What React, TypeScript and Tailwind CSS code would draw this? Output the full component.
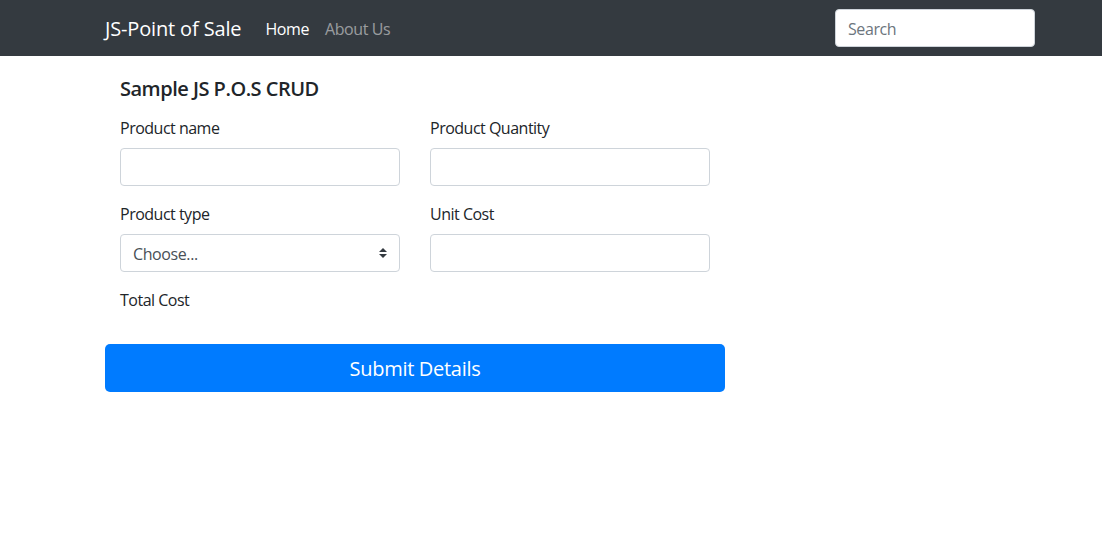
import React from "react";

export default function App() {
  const font = { fontFamily: '"Open Sans", "Noto Sans", sans-serif' };
  return (
    <div className="min-h-[549px] bg-white text-[#212529]" style={font}>
      <nav className="h-[56px] bg-[#343a40] flex items-center pl-[105px] pr-[67px]">
        <span className="text-[20px] text-white leading-[30px] mr-[24px] tracking-[-0.15px] pt-[1px]">JS-Point of Sale</span>
        <span className="text-[16px] text-white mr-[16px] tracking-[-0.4px] pt-[1px]">Home</span>
        <span className="text-[16px] text-white/50 tracking-[-0.4px] pt-[1px]">About Us</span>
        <div className="flex-1" />
        <div className="w-[200px] h-[38px] bg-white rounded-[4px] border border-[#ced4da] flex items-center px-[12px]">
          <span className="text-[16px] text-[#6c757d] tracking-[-0.4px] pt-[1px]">Search</span>
        </div>
      </nav>
      <div className="pl-[105px] w-[725px]">
        <div className="px-[15px] pt-[21px]">
          <h5 className="text-[20px] font-semibold leading-[24px] mb-[15px] tracking-[-0.5px]">Sample JS P.O.S CRUD</h5>
          <div className="grid grid-cols-2 gap-x-[30px] gap-y-[16px]">
            <Field label="Product name" />
            <Field label="Product Quantity" />
            <div className="flex flex-col">
              <label className="text-[16px] leading-[24px] mb-[8px] tracking-[-0.5px]">Product type</label>
              <div className="h-[38px] rounded-[4px] border border-[#ced4da] flex items-center justify-between pl-[12px] pr-[12px]">
                <span className="text-[16px] text-[#495057] tracking-[-0.4px] pt-[1px]">Choose...</span>
                <svg width="8" height="10" viewBox="0 0 8 10">
                  <path d="M4 0 L8 4 H0 Z" fill="#343a40" />
                  <path d="M4 10 L8 6 H0 Z" fill="#343a40" />
                </svg>
              </div>
            </div>
            <Field label="Unit Cost" />
            <div className="flex flex-col">
              <label className="text-[16px] leading-[24px] tracking-[-0.5px]">Total Cost</label>
            </div>
          </div>
        </div>
        <button className="mt-[32px] w-[620px] h-[48px] bg-[#007bff] text-white text-[20px] rounded-[5px] tracking-[-0.3px] pt-[2px]">
          Submit Details
        </button>
      </div>
    </div>
  );
}

function Field({ label }: { label: string }) {
  return (
    <div className="flex flex-col">
      <label className="text-[16px] leading-[24px] mb-[8px] tracking-[-0.5px]">{label}</label>
      <div className="h-[38px] rounded-[4px] border border-[#ced4da] bg-white" />
    </div>
  );
}
